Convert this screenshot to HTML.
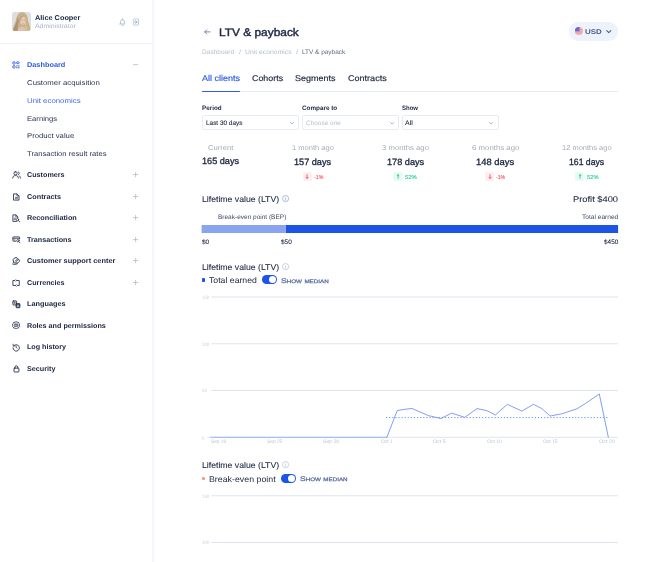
<!DOCTYPE html>
<html><head><meta charset="utf-8"><title>LTV &amp; payback</title>
<style>
*{margin:0;padding:0;box-sizing:border-box}
html,body{width:668px;height:562px;overflow:hidden;background:#fff}
body{position:relative;font-family:"Liberation Sans",sans-serif;will-change:transform;text-rendering:geometricPrecision}
.t{position:absolute;white-space:nowrap;line-height:1;transform-origin:0 50%;display:block}
.a{position:absolute}
svg{position:absolute;overflow:visible}
.ic{fill:none;stroke:#2b3853;stroke-width:2.3;stroke-linecap:round;stroke-linejoin:round}
.sel{position:absolute;top:115.4px;height:15px;border:0.9px solid #e7ecf4;border-radius:2px;background:#fff}
.gl{position:absolute;left:211.8px;width:406.2px;height:1px;background:#dfe5ee}
.bd{position:absolute;top:172px;width:9.500px;height:9px;border-radius:1.500px}
</style></head><body>

<!-- sidebar -->
<div class="a" style="left:151.600px;top:0;width:4.500px;height:562px;background:linear-gradient(90deg,#f1f4f9 0,#f8f9fc 45%,#fff 100%)"></div>
<div class="a" style="left:0;top:43px;width:151.600px;height:1px;background:#edf1f8"></div>

<!-- avatar -->
<svg style="left:12.200px;top:12.100px" width="19" height="19" viewBox="0 0 18 18">
<defs><clipPath id="av"><rect x="0" y="0" width="18" height="18" rx="2.300"/></clipPath>
<filter id="avb" x="-10%" y="-10%" width="120%" height="120%"><feGaussianBlur stdDeviation="0.550"/></filter></defs>
<g clip-path="url(#av)"><rect width="18" height="18" fill="#dcdee1"/>
<g filter="url(#avb)">
<path d="M8.500 0.300C12 -0.300 14.500 2 14.800 6C15.200 10 17 12 17.500 18H0.500C1 14 2.500 12 3.500 8.500C4.500 4.500 5.500 1 8.500 0.300Z" fill="#c8b08b"/>
<path d="M5.500 5C4.500 9 3.500 12 1.500 15.500L1 18H6C5 15 5.500 11 6.500 8Z" fill="#ad9370"/>
<ellipse cx="10.300" cy="8.200" rx="2.700" ry="3.900" fill="#e6cbb9"/>
<path d="M7.500 5.500C8 3.500 10 2.800 12 3.500C11 4.200 9 5 8 8C7.600 9.500 7.500 11 7 12.500C6.500 10 6.800 7.500 7.500 5.500Z" fill="#c2a67d"/>
<path d="M5 18C5.500 15 8 13.800 10 13.800C11.500 13.800 12.500 15 13 18Z" fill="#dfbfae"/>
<path d="M12.800 6C13.800 9 13.200 12 14 14.500C14.500 16 15.500 17.500 17 18H12.500C12 15.500 12.500 13 12.300 11C12.600 9.500 12.900 8 12.800 6Z" fill="#d4bf98"/>
<path d="M9 7.600h1M11.300 7.600h0.900" stroke="#7c6a66" stroke-width="0.500" fill="none"/>
<path d="M10 10.800h1.200" stroke="#c98f8a" stroke-width="0.500" fill="none"/>
</g></g></svg>

<!-- bell -->
<svg style="left:119.4px;top:17.6px" width="7" height="7.8" viewBox="0 0 22 24"><path d="M5 16.500V11a6 6 0 0 1 12 0v5.500l2 2H3zM11 5V2.500M8.500 22.500h5" fill="none" stroke="#a4b8cf" stroke-width="2.600" stroke-linejoin="round" stroke-linecap="round"/></svg>
<!-- logout -->
<svg style="left:131.900px;top:17.800px" width="7.200" height="8" viewBox="0 0 22 24"><path d="M4 8V5.500a3 3 0 0 1 3-3h10a3 3 0 0 1 3 3v13a3 3 0 0 1-3 3H7a3 3 0 0 1-3-3V16" fill="none" stroke="#a9bdd3" stroke-width="2.400" stroke-linejoin="round" stroke-linecap="round"/><path d="M5 12h10M11.500 8l4 4-4 4" fill="none" stroke="#8aa6c2" stroke-width="2.600" stroke-linejoin="round" stroke-linecap="round"/></svg>

<!-- menu icons -->
<svg style="left:12.400px;top:60.700px" width="8" height="8" viewBox="0 0 8 8"><g fill="none" stroke="#2d5be3" stroke-width="0.850"><rect x="0.850" y="0.850" width="2.200" height="2.200" rx="0.300"/><rect x="4.700" y="0.850" width="2.300" height="1.800" rx="0.300"/><rect x="0.850" y="4.700" width="2.200" height="2.200" rx="0.300"/></g><g fill="#2d5be3"><rect x="4.300" y="4.300" width="1.200" height="1.200"/><rect x="6.200" y="4.300" width="1.200" height="1.200"/><rect x="4.300" y="6.100" width="1.200" height="1.200"/><rect x="6.200" y="6.100" width="1.200" height="1.200"/></g></svg>
<svg style="left:11.5px;top:170.6px" width="9.4" height="8" viewBox="0 0 9.4 8"><g fill="none" stroke="#2b3853" stroke-width="0.9" stroke-linecap="round" stroke-linejoin="round"><rect x="1.900" y="0.800" width="3.300" height="3" rx="1.400"/><path d="M0.700 7.100C0.700 5.300 1.900 4.600 3.550 4.600S6.400 5.300 6.400 7.100"/><path d="M6.500 0.800C7.600 1 7.600 3.500 6.500 3.800M7.300 4.800C8 5.200 8.400 5.900 8.400 7.100"/></g></svg>
<svg style="left:12.7px;top:192.5px" width="7" height="8" viewBox="0 0 7 8"><g fill="none" stroke="#2b3853" stroke-width="0.9" stroke-linecap="round" stroke-linejoin="round"><path d="M0.900 0.900H4L6 2.900V7.100H0.900Z"/><path d="M3.900 1v2h2" stroke-width="0.700"/><path d="M2.400 4.400h2.100M2.400 5.700h2.100" stroke-width="0.700"/></g></svg>
<svg style="left:12.1px;top:213.8px" width="8.2" height="8.4" viewBox="0 0 8.2 8.4"><g fill="none" stroke="#2b3853" stroke-width="0.9" stroke-linecap="round" stroke-linejoin="round"><path d="M4.500 7.400H0.900V0.900H3.900L5.800 2.800V4"/><path d="M3.800 1v1.900h1.900" stroke-width="0.700"/><path d="M2.200 4.200h1.500M2.200 5.600h1.200" stroke-width="0.700"/><circle cx="5.500" cy="5.700" r="1.200" stroke-width="0.800"/><path d="M6.400 6.600L7.600 7.800"/></g></svg>
<svg style="left:11.7px;top:235.8px" width="8.8" height="7.4" viewBox="0 0 8.8 7.4"><g fill="none" stroke="#2b3853" stroke-width="0.9" stroke-linecap="round" stroke-linejoin="round"><path d="M3.700 5.200H1.400a0.500 0.500 0 0 1-0.500-0.500V1.400a0.500 0.500 0 0 1 0.500-0.500H7.100a0.500 0.500 0 0 1 0.500 0.500V3"/><path d="M0.900 2.300H7.600" stroke-width="0.800"/><path d="M2 3.900h1" stroke-width="0.700"/><circle cx="5.900" cy="4.700" r="1.200" stroke-width="0.800"/><path d="M6.800 5.600L8 6.800"/></g></svg>
<svg style="left:11.7px;top:257.1px" width="8.6" height="7.8" viewBox="0 0 8.6 7.8"><g fill="none" stroke="#2b3853" stroke-width="0.9" stroke-linecap="round" stroke-linejoin="round"><path d="M1.400 4.800A2.900 2.900 0 0 1 6.600 2.200" stroke-width="0.950"/><path d="M5.700 3C6.200 2.300 7.600 2.600 7.600 3.700C7.600 4.600 6.500 5.400 5.700 5.900C4.900 5.400 3.800 4.600 3.800 3.700C3.800 2.600 5.200 2.300 5.700 3Z" stroke-width="0.900"/><path d="M0.900 5.800C1.700 5.100 2.800 5.100 3.500 5.800L5 6.200C5.600 6.400 5.400 7.100 4.800 7.100H2.800M0.900 7.200H3" stroke-width="0.900"/></g></svg>
<svg style="left:11.9px;top:278.5px" width="8.2" height="7.8" viewBox="0 0 8.2 7.8"><g fill="none" stroke="#2b3853" stroke-width="0.9" stroke-linecap="round" stroke-linejoin="round"><path d="M2.800 1.500H0.900V6.500H3.500M5.400 6.500H7.300V1.500H4.700"/><path d="M3.900 0.600L4.800 1.500L3.900 2.400M4.300 5.600L3.400 6.500L4.300 7.400" stroke-width="0.750"/></g></svg>
<svg style="left:11.7px;top:299.5px" width="8.8" height="8.6" viewBox="0 0 8.8 8.6"><g fill="none" stroke="#2b3853" stroke-width="0.9" stroke-linecap="round" stroke-linejoin="round"><rect x="0.900" y="0.900" width="3.700" height="4.100" rx="0.400"/><rect x="4.100" y="3.600" width="3.800" height="4.100" rx="0.400" fill="#2b3853"/><path d="M1.800 2.200h1.900M2.750 1.900v0.300C2.750 3 2.400 3.600 1.800 4M2.200 2.900C2.600 3.400 3.100 3.700 3.700 3.900" stroke-width="0.550"/><path d="M5.200 6.800L6 4.600L6.800 6.800M5.500 6.100h1" stroke="#fff" stroke-width="0.500"/></g></svg>
<svg style="left:11.9px;top:321.1px" width="8.2" height="8.4" viewBox="0 0 8.2 8.4"><g fill="none" stroke="#2b3853" stroke-width="0.9" stroke-linecap="round" stroke-linejoin="round"><path d="M4.100 0.800L5.200 1.300L6.400 1.200L6.800 2.300L7.700 3L7.400 4.200L7.700 5.400L6.800 6.100L6.400 7.200L5.200 7.100L4.100 7.600L3 7.100L1.800 7.200L1.400 6.100L0.500 5.400L0.800 4.200L0.500 3L1.400 2.300L1.800 1.200L3 1.300Z" stroke-width="0.800"/><ellipse cx="4.100" cy="4.200" rx="1.900" ry="0.900" stroke-width="0.650"/><path d="M2.300 2.900C3 3.300 5.200 3.300 5.900 2.900M2.300 5.500C3 5.100 5.200 5.100 5.900 5.500" stroke-width="0.600"/></g></svg>
<svg style="left:11.9px;top:342.5px" width="8.2" height="8.4" viewBox="0 0 8.2 8.4"><g fill="none" stroke="#2b3853" stroke-width="0.9" stroke-linecap="round" stroke-linejoin="round"><path d="M1.700 2.900A3.200 3.200 0 1 1 1 4.700"/><path d="M1.100 1.200V2.900H2.800" stroke-width="0.800"/><path d="M4.100 2.900V4.400L5.100 5.100" stroke-width="0.800"/></g></svg>
<svg style="left:12.600px;top:364.600px" width="7" height="8" viewBox="0 0 7 8"><g fill="none" stroke="#2b3853" stroke-width="0.950" stroke-linecap="round" stroke-linejoin="round"><rect x="1" y="3.100" width="4.900" height="3.900" rx="0.500"/><path d="M2.100 3.100V2.200a1.350 1.350 0 0 1 2.700 0V3.100"/></g></svg>

<!-- minus / plus -->
<svg style="left:133.3px;top:61.8px" width="5.2" height="5.2" viewBox="0 0 10 10"><path d="M0.700 5h8.600" fill="none" stroke="#a3afc4" stroke-width="1.250" stroke-linecap="round"/></svg>

<svg style="left:133.3px;top:172.3px" width="5.2" height="5.2" viewBox="0 0 10 10"><path d="M5 0.7v8.600M0.700 5h8.600" fill="none" stroke="#a3afc4" stroke-width="1.250" stroke-linecap="round"/></svg>
<svg style="left:133.3px;top:193.8px" width="5.2" height="5.2" viewBox="0 0 10 10"><path d="M5 0.7v8.600M0.700 5h8.600" fill="none" stroke="#a3afc4" stroke-width="1.250" stroke-linecap="round"/></svg>
<svg style="left:133.3px;top:215.1px" width="5.2" height="5.2" viewBox="0 0 10 10"><path d="M5 0.7v8.600M0.700 5h8.600" fill="none" stroke="#a3afc4" stroke-width="1.250" stroke-linecap="round"/></svg>
<svg style="left:133.3px;top:236.7px" width="5.2" height="5.2" viewBox="0 0 10 10"><path d="M5 0.7v8.600M0.700 5h8.600" fill="none" stroke="#a3afc4" stroke-width="1.250" stroke-linecap="round"/></svg>
<svg style="left:133.3px;top:258.2px" width="5.2" height="5.2" viewBox="0 0 10 10"><path d="M5 0.7v8.600M0.700 5h8.600" fill="none" stroke="#a3afc4" stroke-width="1.250" stroke-linecap="round"/></svg>
<svg style="left:133.3px;top:279.6px" width="5.2" height="5.2" viewBox="0 0 10 10"><path d="M5 0.7v8.600M0.700 5h8.600" fill="none" stroke="#a3afc4" stroke-width="1.250" stroke-linecap="round"/></svg>
<!-- header -->
<svg style="left:203.800px;top:28.600px" width="6.600" height="5.800" viewBox="0 0 24 21"><path d="M22 10.500H3M10 3L2.500 10.500 10 18" fill="none" stroke="#5f72a0" stroke-width="3" stroke-linecap="round" stroke-linejoin="round"/></svg>

<div class="a" style="left:569.100px;top:22.200px;width:49px;height:18.400px;border-radius:9.200px;background:#eef2fb"></div>
<svg style="left:575px;top:27.300px" width="7.800" height="7.800" viewBox="0 0 20 20"><defs><clipPath id="fl"><circle cx="10" cy="10" r="10"/></clipPath></defs><g clip-path="url(#fl)"><rect width="20" height="20" fill="#f08f8f"/><rect y="3" width="20" height="1.800" fill="#f7c6c6"/><rect y="7.500" width="20" height="1.800" fill="#f7c6c6"/><rect y="12" width="20" height="1.800" fill="#f7c6c6"/><rect y="16.500" width="20" height="1.800" fill="#f7c6c6"/><rect width="11.500" height="11" fill="#5a6fd8"/></g></svg>
<svg style="left:606.300px;top:29.800px" width="5.600" height="3.400" viewBox="0 0 16 10"><path d="M2 2l6 6 6-6" fill="none" stroke="#4a5f8c" stroke-width="3.200" stroke-linecap="round" stroke-linejoin="round"/></svg>

<!-- tabs underline -->
<div class="a" style="left:201.700px;top:91.200px;width:416.300px;height:0.900px;background:#e7ecf3"></div>
<div class="a" style="left:201.700px;top:90.600px;width:38.100px;height:1.300px;background:#2d5be3;border-radius:1px"></div>

<!-- selects -->
<div class="sel" style="left:202.200px;width:97.200px"></div>
<div class="sel" style="left:301.800px;width:97.400px"></div>
<div class="sel" style="left:401.600px;width:97px"></div>
<svg style="left:290px;top:121.700px" width="4.200" height="2.600" viewBox="0 0 16 10"><path d="M2 2l6 6 6-6" fill="none" stroke="#7d8aa3" stroke-width="2.400" stroke-linecap="round" stroke-linejoin="round"/></svg>
<svg style="left:389.600px;top:121.700px" width="4.200" height="2.600" viewBox="0 0 16 10"><path d="M2 2l6 6 6-6" fill="none" stroke="#7d8aa3" stroke-width="2.400" stroke-linecap="round" stroke-linejoin="round"/></svg>
<svg style="left:489.100px;top:121.700px" width="4.200" height="2.600" viewBox="0 0 16 10"><path d="M2 2l6 6 6-6" fill="none" stroke="#7d8aa3" stroke-width="2.400" stroke-linecap="round" stroke-linejoin="round"/></svg>

<!-- badges -->
<div class="bd" style="left:302.600px;background:#feeef0"></div>
<div class="bd" style="left:393.400px;background:#e9faf3"></div>
<div class="bd" style="left:484.900px;background:#feeef0"></div>
<div class="bd" style="left:574.900px;background:#e9faf3"></div>
<svg style="left:305.300px;top:174.200px" width="4.200" height="5" viewBox="0 0 10 12"><path d="M5 1.500v9M2.600 8.100l2.400 2.400 2.400-2.400" fill="none" stroke="#f8485e" stroke-width="2.100" stroke-linecap="round" stroke-linejoin="round"/></svg>
<svg style="left:487.600px;top:174.200px" width="4.200" height="5" viewBox="0 0 10 12"><path d="M5 1.500v9M2.600 8.100l2.400 2.400 2.400-2.400" fill="none" stroke="#f8485e" stroke-width="2.100" stroke-linecap="round" stroke-linejoin="round"/></svg>
<svg style="left:396.100px;top:174.200px" width="4.200" height="5" viewBox="0 0 10 12"><path d="M5 10.500v-9M2.600 3.900l2.400-2.400 2.400 2.400" fill="none" stroke="#1fc98f" stroke-width="2.100" stroke-linecap="round" stroke-linejoin="round"/></svg>
<svg style="left:577.600px;top:174.200px" width="4.200" height="5" viewBox="0 0 10 12"><path d="M5 10.500v-9M2.600 3.900l2.400-2.400 2.400 2.400" fill="none" stroke="#1fc98f" stroke-width="2.100" stroke-linecap="round" stroke-linejoin="round"/></svg>

<!-- info icons -->
<svg style="left:281.900px;top:194.9px" width="7.200" height="7.200" viewBox="0 0 20 20"><circle cx="10" cy="10" r="8.600" fill="none" stroke="#7a95cf" stroke-width="1.700"/><path d="M10 9.200v5.300" stroke="#7a95cf" stroke-width="1.600" stroke-linecap="round"/><circle cx="10" cy="6" r="1.100" fill="#7a95cf"/></svg>
<svg style="left:281.900px;top:262.6px" width="7.200" height="7.200" viewBox="0 0 20 20"><circle cx="10" cy="10" r="8.600" fill="none" stroke="#aab7ca" stroke-width="1.700"/><path d="M10 9.200v5.300" stroke="#aab7ca" stroke-width="1.600" stroke-linecap="round"/><circle cx="10" cy="6" r="1.100" fill="#aab7ca"/></svg>
<svg style="left:281.900px;top:461.3px" width="7.200" height="7.200" viewBox="0 0 20 20"><circle cx="10" cy="10" r="8.600" fill="none" stroke="#aab7ca" stroke-width="1.700"/><path d="M10 9.200v5.300" stroke="#aab7ca" stroke-width="1.600" stroke-linecap="round"/><circle cx="10" cy="6" r="1.100" fill="#aab7ca"/></svg>

<!-- bar -->


<div class="a" style="left:285.600px;top:221px;width:0.600px;height:16px;background:repeating-linear-gradient(180deg,#cfd8ee 0 1.200px,transparent 1.200px 2.400px)"></div>

<!-- chart 1 -->
<div class="a" style="left:201.700px;top:278px;width:3.600px;height:3.600px;border-radius:0.800px;background:#1d53e6"></div>
<div class="a" style="left:262px;top:275.100px;width:15.200px;height:9px;border-radius:4.500px;background:#1d53e6"></div>
<div class="a" style="left:269.300px;top:276px;width:7.200px;height:7.200px;border-radius:3.600px;background:#fff"></div>
<svg style="left:0;top:0" width="668" height="562" viewBox="0 0 668 562">
<path d="M211.300 297.0H618" stroke="#dee4ed" stroke-width="1.100" fill="none"/><path d="M211.300 343.75H618" stroke="#dee4ed" stroke-width="1.100" fill="none"/><path d="M211.300 390.5H618" stroke="#dee4ed" stroke-width="1.100" fill="none"/><path d="M211.300 437.25H618" stroke="#dee4ed" stroke-width="1.100" fill="none"/><path d="M211.300 495.8H618" stroke="#dee4ed" stroke-width="1.100" fill="none"/><path d="M211.300 542.5H618" stroke="#dee4ed" stroke-width="1.100" fill="none"/>
<rect x="285.800" y="225" width="332.300" height="8" fill="#1d53e6"/><rect x="201.600" y="225" width="84.250" height="8" fill="#8aa4ef"/>
<path d="M386 417.600H608.400" fill="none" stroke="#5b82ea" stroke-width="0.900" stroke-dasharray="1.200 1.900"/>
<path d="M207.300 437.250H211.300" stroke="#dee4ed" stroke-width="1.100" fill="none"/><path d="M210.500 437.300H386.900" fill="none" stroke="#8aa6f1" stroke-width="0.850"/><path d="M386.400 437.300H386.900L397.200 410.600L403.100 409.600L411.800 408.400L428.400 415.600L441 418.500L451.700 413.100L464.800 417.400L477 408.600L486.800 410.600L495.500 415L500 410.800L507.400 404.300L521.800 411.100L533.500 404.300L541.800 408.600L550.200 416L562.300 413.700L576.900 408.800L585.600 403.400L599.300 394L608.400 437.600" fill="none" stroke="#6a8eed" stroke-width="0.850" stroke-linejoin="round"/>
</svg>

<!-- chart 2 -->
<div class="a" style="left:201.700px;top:476.700px;width:3.600px;height:3.600px;border-radius:0.800px;background:#f7a37a"></div>
<div class="a" style="left:280.600px;top:473.900px;width:15.200px;height:9px;border-radius:4.500px;background:#1d53e6"></div>
<div class="a" style="left:287.900px;top:474.800px;width:7.200px;height:7.200px;border-radius:3.600px;background:#fff"></div>

<span class="t" style="left:35.20px;top:15px;font-size:7.0px;font-weight:700;color:#202b45;transform:translateY(0.25px) matrix(1.0489,0.0004,0,1,0,0);">Alice Cooper</span>
<span class="t" style="left:35.20px;top:24px;font-size:6.4px;font-weight:400;color:#a9b5c7;transform:translateY(0.25px) matrix(1.0835,0.0004,0,1,0,0);">Administrator</span>
<span class="t" style="left:26.60px;top:61px;font-size:7.0px;font-weight:700;color:#2d5be3;transform:translateY(0.75px) matrix(1.0475,0.0004,0,1,0,0);">Dashboard</span>
<span class="t" style="left:26.60px;top:80px;font-size:7.0px;font-weight:400;color:#2a3550;transform:translateY(0.25px) matrix(1.1136,0.0004,0,1,0,0);">Customer acquisition</span>
<span class="t" style="left:26.60px;top:97px;font-size:7.0px;font-weight:400;color:#3f69e6;transform:translateY(1.0px) matrix(1.1199,0.0004,0,1,0,0);">Unit economics</span>
<span class="t" style="left:26.60px;top:115px;font-size:7.0px;font-weight:400;color:#2a3550;transform:translateY(0.75px) matrix(1.0926,0.0004,0,1,0,0);">Earnings</span>
<span class="t" style="left:26.60px;top:132px;font-size:7.0px;font-weight:400;color:#2a3550;transform:translateY(1.0px) matrix(1.1025,0.0004,0,1,0,0);">Product value</span>
<span class="t" style="left:26.60px;top:150px;font-size:7.0px;font-weight:400;color:#2a3550;transform:translateY(0.5px) matrix(1.0907,0.0004,0,1,0,0);">Transaction result rates</span>
<span class="t" style="left:26.60px;top:172px;font-size:7.0px;font-weight:700;color:#202b45;transform:translateY(0.25px) matrix(1.0279,0.0004,0,1,0,0);">Customers</span>
<span class="t" style="left:26.60px;top:193px;font-size:7.0px;font-weight:700;color:#202b45;transform:translateY(0.75px) matrix(1.0402,0.0004,0,1,0,0);">Contracts</span>
<span class="t" style="left:26.60px;top:215px;font-size:7.0px;font-weight:700;color:#202b45;transform:translateY(0.0px) matrix(1.0409,0.0004,0,1,0,0);">Reconciliation</span>
<span class="t" style="left:26.60px;top:236px;font-size:7.0px;font-weight:700;color:#202b45;transform:translateY(0.75px) matrix(1.0304,0.0004,0,1,0,0);">Transactions</span>
<span class="t" style="left:26.60px;top:258px;font-size:7.0px;font-weight:700;color:#202b45;transform:translateY(0.25px) matrix(1.0571,0.0004,0,1,0,0);">Customer support center</span>
<span class="t" style="left:26.60px;top:279px;font-size:7.0px;font-weight:700;color:#202b45;transform:translateY(0.5px) matrix(1.0279,0.0004,0,1,0,0);">Currencies</span>
<span class="t" style="left:26.60px;top:301px;font-size:7.0px;font-weight:700;color:#202b45;transform:translateY(0.25px) matrix(1.0419,0.0004,0,1,0,0);">Languages</span>
<span class="t" style="left:26.60px;top:322px;font-size:7.0px;font-weight:700;color:#202b45;transform:translateY(0.75px) matrix(1.0282,0.0004,0,1,0,0);">Roles and permissions</span>
<span class="t" style="left:26.60px;top:344px;font-size:7.0px;font-weight:700;color:#202b45;transform:translateY(0.25px) matrix(1.0230,0.0004,0,1,0,0);">Log history</span>
<span class="t" style="left:26.60px;top:365px;font-size:7.0px;font-weight:700;color:#202b45;transform:translateY(0.75px) matrix(1.0317,0.0004,0,1,0,0);">Security</span>
<span class="t" style="left:219.40px;top:27px;font-size:11.1px;font-weight:400;color:#1c2742;transform:translateY(0.5px) matrix(1.0725,0.0004,0,1,0,0);-webkit-text-stroke:0.42px currentColor;">LTV &amp; payback</span>
<span class="t" style="left:201.70px;top:49px;font-size:6.4px;font-weight:400;color:#b3bfd0;transform:translateY(0.75px) matrix(1.0267,0.0004,0,1,0,0);">Dashboard</span>
<span class="t" style="left:238.60px;top:49px;font-size:6.4px;font-weight:400;color:#b3bfd0;transform:translateY(0.75px) matrix(1.2351,0.0004,0,1,0,0);">/</span>
<span class="t" style="left:244.80px;top:49px;font-size:6.4px;font-weight:400;color:#b3bfd0;transform:translateY(0.75px) matrix(1.0690,0.0004,0,1,0,0);">Unit economics</span>
<span class="t" style="left:296.30px;top:49px;font-size:6.4px;font-weight:400;color:#b3bfd0;transform:translateY(0.75px) matrix(1.2351,0.0004,0,1,0,0);">/</span>
<span class="t" style="left:302.00px;top:49px;font-size:6.4px;font-weight:400;color:#5d6b84;transform:translateY(0.75px) matrix(1.0076,0.0004,0,1,0,0);">LTV &amp; payback</span>
<span class="t" style="left:585.10px;top:28px;font-size:7.0px;font-weight:700;color:#465b86;transform:translateY(1.0px) matrix(1.1366,0.0004,0,1,0,0);">USD</span>
<span class="t" style="left:201.70px;top:73px;font-size:8.35px;font-weight:400;color:#2d5be3;transform:translateY(0.75px) matrix(1.0809,0.0004,0,1,0,0);-webkit-text-stroke:0.16px currentColor;">All clients</span>
<span class="t" style="left:251.80px;top:73px;font-size:8.35px;font-weight:400;color:#202b45;transform:translateY(0.75px) matrix(1.0644,0.0004,0,1,0,0);-webkit-text-stroke:0.16px currentColor;">Cohorts</span>
<span class="t" style="left:294.90px;top:73px;font-size:8.35px;font-weight:400;color:#202b45;transform:translateY(0.75px) matrix(1.0778,0.0004,0,1,0,0);-webkit-text-stroke:0.16px currentColor;">Segments</span>
<span class="t" style="left:347.50px;top:73px;font-size:8.35px;font-weight:400;color:#202b45;transform:translateY(0.75px) matrix(1.0835,0.0004,0,1,0,0);-webkit-text-stroke:0.16px currentColor;">Contracts</span>
<span class="t" style="left:201.70px;top:105px;font-size:6.4px;font-weight:700;color:#202b45;transform:translateY(0.75px) matrix(0.9854,0.0004,0,1,0,0);">Period</span>
<span class="t" style="left:301.80px;top:105px;font-size:6.4px;font-weight:700;color:#202b45;transform:translateY(0.75px) matrix(0.9911,0.0004,0,1,0,0);">Compare to</span>
<span class="t" style="left:401.80px;top:105px;font-size:6.4px;font-weight:700;color:#202b45;transform:translateY(0.75px) matrix(0.9386,0.0004,0,1,0,0);">Show</span>
<span class="t" style="left:205.80px;top:121px;font-size:6.4px;font-weight:400;color:#202b45;transform:translateY(0.25px) matrix(1.0041,0.0004,0,1,0,0);-webkit-text-stroke:0.08px currentColor;">Last 30 days</span>
<span class="t" style="left:305.70px;top:121px;font-size:6.4px;font-weight:400;color:#b7c2d2;transform:translateY(0.25px) matrix(1.0125,0.0004,0,1,0,0);">Choose one</span>
<span class="t" style="left:405.20px;top:121px;font-size:6.4px;font-weight:400;color:#202b45;transform:translateY(0.25px) matrix(1.0971,0.0004,0,1,0,0);-webkit-text-stroke:0.08px currentColor;">All</span>
<span class="t" style="left:207.50px;top:144px;font-size:7.0px;font-weight:400;color:#a6abb4;transform:translateY(0.75px) matrix(1.0838,0.0004,0,1,0,0);">Current</span>
<span class="t" style="left:201.70px;top:156px;font-size:9.1px;font-weight:400;color:#1c2742;transform:translateY(0.75px) matrix(1.0048,0.0004,0,1,0,0);-webkit-text-stroke:0.32px currentColor;">165 days</span>
<span class="t" style="left:292.00px;top:144px;font-size:7.0px;font-weight:400;color:#a6abb4;transform:translateY(0.75px) matrix(1.0765,0.0004,0,1,0,0);">1 month ago</span>
<span class="t" style="left:294.40px;top:157px;font-size:9.1px;font-weight:400;color:#1c2742;transform:translateY(0.75px) matrix(1.0048,0.0004,0,1,0,0);-webkit-text-stroke:0.32px currentColor;">157 days</span>
<span class="t" style="left:381.90px;top:144px;font-size:7.0px;font-weight:400;color:#a6abb4;transform:translateY(0.75px) matrix(1.1079,0.0004,0,1,0,0);">3 months ago</span>
<span class="t" style="left:386.90px;top:157px;font-size:9.1px;font-weight:400;color:#1c2742;transform:translateY(0.75px) matrix(1.0075,0.0004,0,1,0,0);-webkit-text-stroke:0.32px currentColor;">178 days</span>
<span class="t" style="left:471.50px;top:144px;font-size:7.0px;font-weight:400;color:#a6abb4;transform:translateY(0.75px) matrix(1.1173,0.0004,0,1,0,0);">6 months ago</span>
<span class="t" style="left:476.30px;top:157px;font-size:9.1px;font-weight:400;color:#1c2742;transform:translateY(1.0px) matrix(1.0319,0.0004,0,1,0,0);-webkit-text-stroke:0.32px currentColor;">148 days</span>
<span class="t" style="left:561.80px;top:144px;font-size:7.0px;font-weight:400;color:#a6abb4;transform:translateY(0.75px) matrix(1.0710,0.0004,0,1,0,0);">12 months ago</span>
<span class="t" style="left:569.00px;top:157px;font-size:9.1px;font-weight:400;color:#1c2742;transform:translateY(1.0px) matrix(0.9534,0.0004,0,1,0,0);-webkit-text-stroke:0.32px currentColor;">161 days</span>
<span class="t" style="left:314.30px;top:175px;font-size:5.6px;font-weight:400;color:#f8566a;transform:translateY(0.5px) matrix(0.9344,0.0004,0,1,0,0);-webkit-text-stroke:0.15px currentColor;">-1%</span>
<span class="t" style="left:405.30px;top:175px;font-size:5.6px;font-weight:400;color:#2fd09a;transform:translateY(0.5px) matrix(1.0444,0.0004,0,1,0,0);-webkit-text-stroke:0.15px currentColor;">52%</span>
<span class="t" style="left:496.40px;top:175px;font-size:5.6px;font-weight:400;color:#f8566a;transform:translateY(0.5px) matrix(0.9143,0.0004,0,1,0,0);-webkit-text-stroke:0.15px currentColor;">-1%</span>
<span class="t" style="left:586.70px;top:175px;font-size:5.6px;font-weight:400;color:#2fd09a;transform:translateY(0.5px) matrix(1.0265,0.0004,0,1,0,0);-webkit-text-stroke:0.15px currentColor;">52%</span>
<span class="t" style="left:201.70px;top:194px;font-size:8.35px;font-weight:400;color:#202b45;transform:translateY(0.75px) matrix(1.0412,0.0004,0,1,0,0);-webkit-text-stroke:0.08px currentColor;">Lifetime value (LTV)</span>
<span class="t" style="left:572.60px;top:194px;font-size:8.35px;font-weight:400;color:#202b45;transform:translateY(1.0px) matrix(1.1150,0.0004,0,1,0,0);-webkit-text-stroke:0.08px currentColor;">Profit $400</span>
<span class="t" style="left:218.00px;top:214px;font-size:6.4px;font-weight:400;color:#3b4864;transform:translateY(1.0px) matrix(1.0173,0.0004,0,1,0,0);">Break-even point (BEP)</span>
<span class="t" style="left:581.50px;top:214px;font-size:6.4px;font-weight:400;color:#3b4864;transform:translateY(1.0px) matrix(1.0316,0.0004,0,1,0,0);">Total earned</span>
<span class="t" style="left:201.70px;top:239px;font-size:6.4px;font-weight:400;color:#202b45;transform:translateY(0.5px) matrix(1.0127,0.0004,0,1,0,0);-webkit-text-stroke:0.08px currentColor;">$0</span>
<span class="t" style="left:281.20px;top:239px;font-size:6.4px;font-weight:400;color:#202b45;transform:translateY(0.5px) matrix(1.0120,0.0004,0,1,0,0);-webkit-text-stroke:0.08px currentColor;">$50</span>
<span class="t" style="left:603.50px;top:239px;font-size:6.4px;font-weight:400;color:#202b45;transform:translateY(0.5px) matrix(1.0057,0.0004,0,1,0,0);-webkit-text-stroke:0.08px currentColor;">$450</span>
<span class="t" style="left:201.70px;top:262px;font-size:8.35px;font-weight:400;color:#202b45;transform:translateY(0.5px) matrix(1.0412,0.0004,0,1,0,0);-webkit-text-stroke:0.08px currentColor;">Lifetime value (LTV)</span>
<span class="t" style="left:209.40px;top:275px;font-size:8.35px;font-weight:400;color:#202b45;transform:translateY(0.75px) matrix(1.0427,0.0004,0,1,0,0);">Total earned</span>
<span class="t" style="left:280.70px;top:278px;font-size:6.9px;font-weight:400;color:#5a6f9f;transform:translateY(0.5px) matrix(1.2491,0.0004,0,1,0,0);font-variant:small-caps;-webkit-text-stroke:0.25px currentColor;">Show median</span>
<span class="t" style="left:201.60px;top:296px;font-size:4.8px;font-weight:400;color:#c9d2df;transform:translateY(0.5px) matrix(0.8982,0.0004,0,1,0,0);">150</span>
<span class="t" style="left:201.60px;top:343px;font-size:4.8px;font-weight:400;color:#c9d2df;transform:translateY(0.5px) matrix(0.8982,0.0004,0,1,0,0);">100</span>
<span class="t" style="left:201.60px;top:390px;font-size:4.8px;font-weight:400;color:#c9d2df;transform:translateY(0.0px) matrix(0.9170,0.0004,0,1,0,0);">50</span>
<span class="t" style="left:201.60px;top:437px;font-size:4.8px;font-weight:400;color:#c9d2df;transform:translateY(0.5px) matrix(0.8982,0.0004,0,1,0,0);">0</span>
<span class="t" style="left:210.60px;top:439px;font-size:5.0px;font-weight:400;color:#bcc8d8;transform:translateY(0.5px) matrix(0.9521,0.0004,0,1,0,0);">Sep 19</span>
<span class="t" style="left:266.90px;top:439px;font-size:5.0px;font-weight:400;color:#bcc8d8;transform:translateY(0.5px) matrix(0.9647,0.0004,0,1,0,0);">Sep 25</span>
<span class="t" style="left:323.40px;top:439px;font-size:5.0px;font-weight:400;color:#bcc8d8;transform:translateY(0.5px) matrix(1.0404,0.0004,0,1,0,0);">Sep 30</span>
<span class="t" style="left:380.70px;top:439px;font-size:5.0px;font-weight:400;color:#bcc8d8;transform:translateY(0.5px) matrix(0.9788,0.0004,0,1,0,0);">Oct 1</span>
<span class="t" style="left:433.30px;top:439px;font-size:5.0px;font-weight:400;color:#bcc8d8;transform:translateY(0.5px) matrix(1.0541,0.0004,0,1,0,0);">Oct 5</span>
<span class="t" style="left:487.20px;top:439px;font-size:5.0px;font-weight:400;color:#bcc8d8;transform:translateY(0.5px) matrix(1.0045,0.0004,0,1,0,0);">Oct 10</span>
<span class="t" style="left:543.20px;top:439px;font-size:5.0px;font-weight:400;color:#bcc8d8;transform:translateY(0.5px) matrix(0.9909,0.0004,0,1,0,0);">Oct 15</span>
<span class="t" style="left:598.90px;top:439px;font-size:5.0px;font-weight:400;color:#bcc8d8;transform:translateY(0.5px) matrix(1.0791,0.0004,0,1,0,0);">Oct 20</span>
<span class="t" style="left:201.70px;top:461px;font-size:8.35px;font-weight:400;color:#202b45;transform:translateY(0.0px) matrix(1.0412,0.0004,0,1,0,0);-webkit-text-stroke:0.08px currentColor;">Lifetime value (LTV)</span>
<span class="t" style="left:209.40px;top:474px;font-size:8.35px;font-weight:400;color:#202b45;transform:translateY(0.5px) matrix(1.0556,0.0004,0,1,0,0);">Break-even point</span>
<span class="t" style="left:299.70px;top:477px;font-size:6.9px;font-weight:400;color:#5a6f9f;transform:translateY(0.25px) matrix(1.2465,0.0004,0,1,0,0);font-variant:small-caps;-webkit-text-stroke:0.25px currentColor;">Show median</span>
<span class="t" style="left:201.60px;top:495px;font-size:4.8px;font-weight:400;color:#c9d2df;transform:translateY(0.5px) matrix(0.8982,0.0004,0,1,0,0);">150</span>
<span class="t" style="left:201.60px;top:542px;font-size:4.8px;font-weight:400;color:#c9d2df;transform:translateY(0.0px) matrix(0.8982,0.0004,0,1,0,0);">100</span>
</body></html>
